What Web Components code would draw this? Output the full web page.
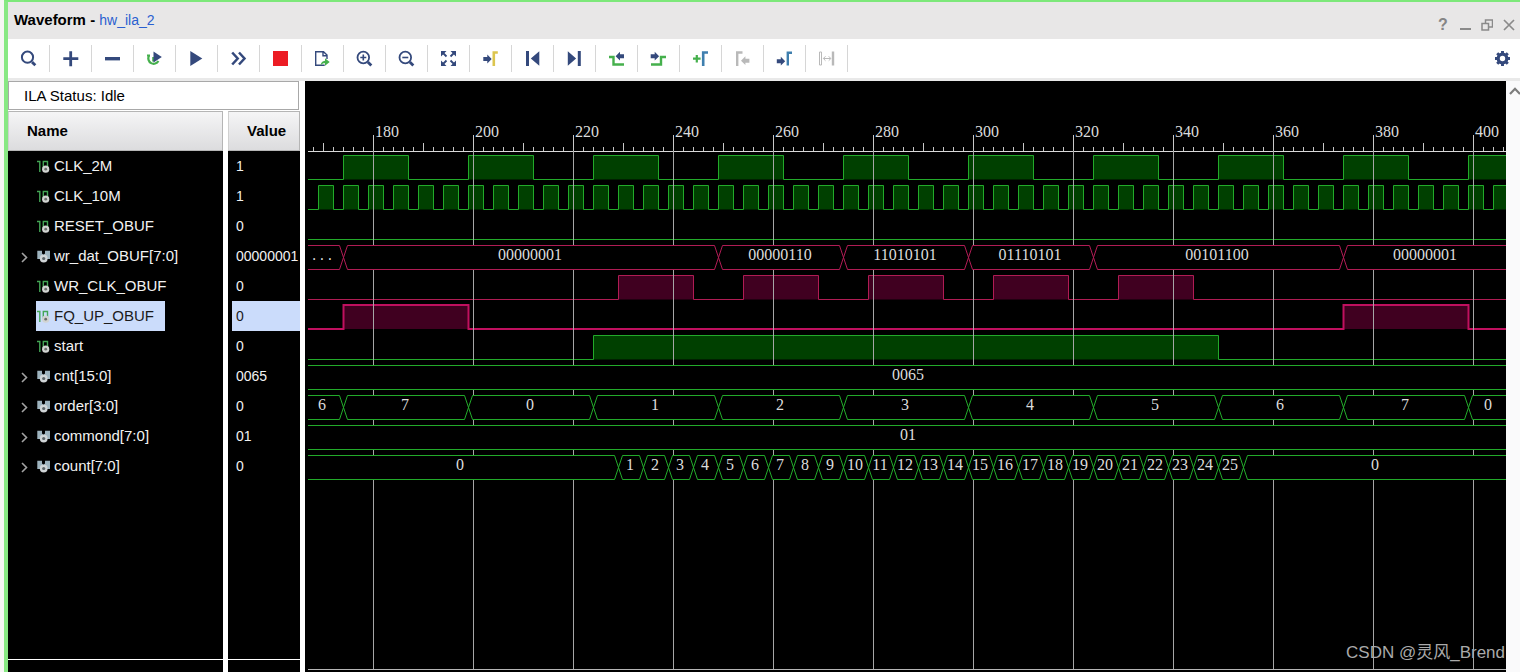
<!DOCTYPE html>
<html lang="en">
<head>
<meta charset="utf-8">
<meta name="viewport" content="width=device-width, initial-scale=1">
<title>Waveform - hw_ila_2</title>
<style>
  html, body { margin: 0; height: 100%; }
  body { font-family: "Liberation Sans", Arial, sans-serif; font-size: 15px; color: #000; background: #f6f6f4; }
</style>
</head>
<body>
<wave-window>
  <title-bar slot="title" heading="Waveform" target="hw_ila_2"></title-bar>
  <tool-bar slot="toolbar">
    <tool-button icon="search" label="Find"></tool-button>
    <tool-button icon="plus" label="Add"></tool-button>
    <tool-button icon="minus" label="Remove"></tool-button>
    <tool-button icon="retrigger" label="Auto re-trigger"></tool-button>
    <tool-button icon="play" label="Run trigger"></tool-button>
    <tool-button icon="forward" label="Run trigger immediate"></tool-button>
    <tool-button icon="stop" label="Stop trigger"></tool-button>
    <tool-button icon="export" label="Export data"></tool-button>
    <tool-button icon="zoomin" label="Zoom in"></tool-button>
    <tool-button icon="zoomout" label="Zoom out"></tool-button>
    <tool-button icon="fit" label="Zoom fit"></tool-button>
    <tool-button icon="cursor" label="Go to cursor"></tool-button>
    <tool-button icon="first" label="Go to start"></tool-button>
    <tool-button icon="last" label="Go to end"></tool-button>
    <tool-button icon="prevedge" label="Previous transition"></tool-button>
    <tool-button icon="nextedge" label="Next transition"></tool-button>
    <tool-button icon="addmarker" label="Add marker"></tool-button>
    <tool-button icon="prevmarker" label="Previous marker"></tool-button>
    <tool-button icon="nextmarker" label="Next marker"></tool-button>
    <tool-button icon="swap" label="Swap cursors"></tool-button>
    <tool-button slot="end" icon="gear" label="Settings"></tool-button>
  </tool-bar>
  <signal-panel slot="signals"><status-box slot="status">ILA Status: Idle</status-box></signal-panel>
  <wave-view slot="waves"><water-mark>CSDN @灵风_Brend</water-mark></wave-view>
  <scroll-strip slot="scroll"></scroll-strip>
</wave-window>

<script>
const NAVY = '#34497c', GREEN = '#45b04c', BLUE = '#3f7fae', GREY = '#b9b9b9';
const arrow = (x, y, color, dir = 1) =>
  `<path fill="${color}" d="M${x} ${y - 2}h${4 * dir}v-2.4l${4.4 * dir} 4.4l${-4.4 * dir} 4.4v-2.4h${-4 * dir}z"/>`;
const ICONS = {
  search: `<g fill="none" stroke="${NAVY}"><circle cx="7.5" cy="7.2" r="5.6" stroke-width="2"/><path d="M12 12l3.3 3.3" stroke-width="2.8"/></g>`,
  plus: `<path d="M1.3 8.7h15M8.7 1.2v15" stroke="${NAVY}" stroke-width="2.8"/>`,
  minus: `<path fill="${NAVY}" d="M1 7h15v3.4H1z"/>`,
  retrigger: `<path d="M1 5.5h3M3 5.8a5.2 5.2 0 1 0 9.4 5.2M7.3 7v4.5" fill="none" stroke="${GREEN}" stroke-width="2.2"/><path fill="${NAVY}" d="M7.5 1.5v11l8.3-5.5z"/>`,
  play: `<path fill="${NAVY}" d="M2.3 1v15l12-7.5z"/>`,
  forward: `<path d="M2.2 2.5l5.5 6-5.5 6M9 2.5l5.5 6-5.5 6" fill="none" stroke="${NAVY}" stroke-width="2.5"/>`,
  stop: `<path fill="#ec1c24" d="M1 1h15v15H1z"/>`,
  export: `<path d="M13 9V5L9.5 1.7H1.7v13.6h9M9 2v3.8h4" fill="none" stroke="${NAVY}" stroke-width="1.4"/><path d="M6.5 15.5c.5-3 2-4.6 4.5-4.8V8.2l4.7 3.8-4.7 3.7v-2.4c-2 0-3.2.6-4.5 2.2z" fill="${GREEN}"/>`,
  zoomin: `<g fill="none" stroke="${NAVY}"><circle cx="7.3" cy="7.5" r="5.8" stroke-width="1.8"/><path d="M4.3 7.5h6M7.3 4.5v6" stroke-width="1.6"/><path d="M11.8 12l3.5 3.5" stroke-width="2.8"/></g>`,
  zoomout: `<g fill="none" stroke="${NAVY}"><circle cx="7.3" cy="7.5" r="5.8" stroke-width="1.8"/><path d="M4.3 7.5h6" stroke-width="1.6"/><path d="M11.8 12l3.5 3.5" stroke-width="2.8"/></g>`,
  fit: `<path fill="${NAVY}" d="M1 1h5.5L1 6.5zM16 1v5.5L10.5 1zM1 16v-5.5L6.5 16zM16 16h-5.5l5.5-5.5z"/><path d="M3 3l3.5 3.5M14 3l-3.5 3.5M3 14l3.5-3.5M14 14l-3.5-3.5" stroke="${NAVY}" stroke-width="1.8"/>`,
  cursor: arrow(1.3, 9, NAVY) + `<path d="M11.8 16V2.5h4" fill="none" stroke="#dcc54e" stroke-width="2.6"/>`,
  first: `<path fill="${NAVY}" d="M2 1h3v15H2zM15.3 1.3v14.4L6.8 8.5z"/>`,
  last: `<path fill="${NAVY}" d="M11.8 1h3v15h-3zM1.8 1.3v14.4l8.3-7.2z"/>`,
  prevedge: `<path d="M1 7h4.5v7.5H16" fill="none" stroke="${GREEN}" stroke-width="2.4"/>` + arrow(16, 6.2, NAVY, -1),
  nextedge: `<path d="M1 14.5h10V7h5" fill="none" stroke="${GREEN}" stroke-width="2.4"/>` + arrow(0.7, 6.2, NAVY),
  addmarker: `<path d="M1 8.7h7.6M4.8 5v7.4" stroke="${GREEN}" stroke-width="2.2"/><path d="M11.2 16V2.5h4.8" fill="none" stroke="${BLUE}" stroke-width="2.6"/>`,
  prevmarker: `<path d="M3.2 16V2.5h5.3" fill="none" stroke="${GREY}" stroke-width="2.4"/>` + arrow(15.4, 10.7, GREY, -1),
  nextmarker: arrow(0.8, 11.2, NAVY) + `<path d="M11.8 15.5V2.8H16" fill="none" stroke="${BLUE}" stroke-width="2.4"/>`,
  swap: `<g fill="none" stroke="${GREY}"><path d="M1.5 2h2v13h-2z"/><path d="M15 1.5v14" stroke-width="2.4"/><path d="M5.5 8.5h7M7.5 6.3L5.3 8.5l2.2 2.2M10.7 6.3l2.2 2.2-2.2 2.2"/></g>`,
  gear: `<g fill="none" stroke="${NAVY}"><circle cx="8.5" cy="8.5" r="4.3" stroke-width="3.2"/><path d="M8.5 1v2.5M8.5 13.5V16M1 8.5h2.5M13.5 8.5H16M3.2 3.2L5 5M12 12l1.8 1.8M3.2 13.8L5 12M12 5l1.8-1.8" stroke-width="2.9"/></g>`
};

/* Signal list; times are in samples. */
const bits = (start, width, period, count) => Array.from({ length: count }, (_, i) => [start + i * period, start + i * period + width]);
const SIGNALS = [
  { name: 'CLK_2M', value: '1', high: bits(174, 13, 25, 10) },
  { name: 'CLK_10M', value: '1', high: bits(169, 3, 5, 48) },
  { name: 'RESET_OBUF', value: '0', high: [] },
  { name: 'wr_dat_OBUF[7:0]', value: '00000001', color: 'red', bus: [[166, '...'], [174, '00000001'], [249, '00000110'], [274, '11010101'], [299, '01110101'], [324, '00101100'], [374, '00000001']] },
  { name: 'WR_CLK_OBUF', value: '0', color: 'red', high: bits(229, 15, 25, 5) },
  { name: 'FQ_UP_OBUF', value: '0', color: 'red', selected: true, high: [[174, 199], [374, 399]] },
  { name: 'start', value: '0', high: [[224, 349]] },
  { name: 'cnt[15:0]', value: '0065', bus: [[167, '0065']] },
  { name: 'order[3:0]', value: '0', bus: [[166, '6'], ...[7, 0, 1, 2, 3, 4, 5, 6, 7, 0].map((v, i) => [174 + 25 * i, String(v)])] },
  { name: 'commond[7:0]', value: '01', bus: [[167, '01']] },
  { name: 'count[7:0]', value: '0', bus: [[166, '0'], ...Array.from({ length: 25 }, (_, i) => [229 + 5 * i, String(i + 1)]), [354, '0']] }
];
const T0 = 167, SCALE = 5;
const toX = t => (t - T0) * SCALE;

class BaseElement extends HTMLElement {
  connectedCallback() {
    if (this.shadowRoot) return;
    this.attachShadow({ mode: 'open' }).innerHTML = this.render();
    if (this.draw) {
      this.draw();
      new ResizeObserver(() => this.draw()).observe(this);
    }
  }
}

customElements.define('wave-window', class extends BaseElement {
  render() {
    return `<style>
      :host { display: flex; flex-direction: column; box-sizing: border-box; min-height: 100%; margin-left: 4px;
              border-top: 2px solid #7de87a; border-left: 4px solid #88e883; background: #fff; }
      main { flex: 1; display: flex; border-top: 3px solid #e9e9e9; }
      slot { display: contents; }
    </style>
    <slot name="title"></slot><slot name="toolbar"></slot>
    <main><slot name="signals"></slot><slot name="waves"></slot><slot name="scroll"></slot></main>`;
  }
});

customElements.define('title-bar', class extends BaseElement {
  render() {
    return `<style>
      :host { display: flex; height: 37px; background: #e8e7e7; }
      h1 { flex: 1; margin: 0; padding-left: 6px; font-size: 15px; line-height: 36px; }
      a { font-size: 14px; font-weight: 400; color: #2a5fd0; text-decoration: none; }
      nav { display: flex; padding-top: 8px; }
      button { width: 22px; height: 29px; padding: 0; border: 0; background: none; color: #858585; font: bold 16px "Liberation Sans", sans-serif; }
      svg { display: block; margin: auto; fill: none; stroke: #8a8a8a; }
    </style>
    <h1>${this.getAttribute('heading')} - <a href="#hw">${this.getAttribute('target')}</a></h1>
    <nav>
      <button aria-label="Help">?</button>
      <button aria-label="Minimize"><svg width="12" height="12"><path d="M1 10h11" stroke-width="2"/></svg></button>
      <button aria-label="Restore"><svg width="12" height="12"><path d="M1 4.5h6.5V11H1zM4.5 4.5V1h7v7h-4" stroke-width="1.5"/></svg></button>
      <button aria-label="Close"><svg width="12" height="12"><path d="M1 1l10 10M11 1L1 11" stroke-width="1.7"/></svg></button>
    </nav>`;
  }
});

customElements.define('tool-bar', class extends BaseElement {
  render() {
    return `<style>
      :host { display: flex; height: 39px; align-items: center; background: #fff; }
      div { flex: 1; display: flex; }
      ::slotted([slot="end"]) { --rule: transparent; margin-right: -4px; }
    </style><div><slot></slot></div><slot name="end"></slot>`;
  }
});

customElements.define('tool-button', class extends BaseElement {
  render() {
    return `<style>
      :host { display: block; width: 42px; }
      button { display: flex; align-items: center; justify-content: center; box-sizing: border-box; width: 100%; height: 27px;
               padding: 0; border: 0; border-right: 1px solid var(--rule, #d6d6d6); background: none; }
    </style>
    <button aria-label="${this.getAttribute('label')}"><svg width="17" height="17" viewBox="0 0 17 17">${ICONS[this.getAttribute('icon')]}</svg></button>`;
  }
});

customElements.define('status-box', class extends BaseElement {
  render() {
    return `<style>
      :host { display: block; box-sizing: border-box; height: 29px; margin: 0 1px 1px 0; padding-left: 15px; border: 1px solid #a8a8a8;
              background: #fff; line-height: 28px; }
    </style><slot></slot>`;
  }
});

customElements.define('signal-panel', class extends BaseElement {
  row(s) {
    const icon = s.bus
      ? `<path fill="#9db3be" d="M.3.7h4.7v2.8l1.5 1.5L8 3.500V.7h5V9H.3z"/><circle cx="6.7" cy="8.5" r="3.9" fill="#cfd4d6"/><circle cx="6.7" cy="8.5" r="1.6" fill="#5c6468"/>`
      : `<path d="M0 1.500h2.800V12M6.300 9V1.500h4.200V7" fill="none" stroke="#43a655" stroke-width="1.4"/><circle cx="8.7" cy="9.2" r="3.6" fill="#d2d4d2"/><circle cx="8.7" cy="9.2" r="1.4" fill="#6b6f6b"/>`;
    const toggle = s.bus
      ? `<button aria-label="Expand ${s.name}"><svg width="7" height="11"><path d="M1 1l4.5 4.5L1 10" fill="none" stroke="#a2a2a2" stroke-width="1.6"/></svg></button>` : '';
    return `<tr class="${s.selected ? 'selected' : ''}"><td><div class="cell"><span class="toggle">${toggle}</span><span class="label"><svg width="13" height="13">${icon}</svg>${s.name}</span></div></td>
      <td><div class="value">${s.value}</div></td></tr>`;
  }
  render() {
    return `<style>
      :host { display: flex; flex-direction: column; flex: none; width: 292px; margin-right: 5px; }
      .body { flex: 1; display: flex; flex-direction: column; justify-content: space-between;
              background: linear-gradient(90deg, #000 215px, #fff 215px, #fff 220px, #000 220px); }
      table { width: 100%; table-layout: fixed; border-collapse: separate; border-spacing: 0; color: #f2f2f2; }
      col:first-child { width: 220px; }
      th, td { padding: 0; }
      th { height: 40px; text-align: left; color: #000; background: #fff; }
      th div { box-sizing: border-box; height: 40px; padding-left: 18px; line-height: 38px; border: 1px solid #b5b5b5; border-left-color: #d0d0d0;
               background: linear-gradient(#f5f5f6, #dcdcde); }
      th:first-child { padding-right: 5px; }
      td { height: 30px; line-height: 30px; white-space: nowrap; }
      .cell { display: flex; height: 30px; }
      .toggle { width: 28px; display: flex; }
      button { width: 14px; margin-left: 9px; padding: 2px 0 0; border: 0; background: none; }
      button svg { display: block; margin: auto; }
      .label { display: flex; align-items: center; gap: 4px; padding: 0 11px 0 1px; }
      .value { margin-left: 4px; padding-left: 4px; font-size: 14px; overflow: hidden; }
      .selected .label, .selected .value { background: #cbdcfb; color: #1a1a1a; }
      footer { height: 12px; border-top: 1px solid #fff; }
    </style>
    <slot name="status"></slot>
    <div class="body">
      <table><colgroup><col><col></colgroup>
        <thead><tr><th><div>Name</div></th><th><div>Value</div></th></tr></thead>
        <tbody>${SIGNALS.map(s => this.row(s)).join('')}</tbody>
      </table>
      <footer></footer>
    </div>`;
  }
});

customElements.define('time-ruler', class extends BaseElement {
  render() {
    return `<style>
      :host { display: block; height: 70px; }
      svg { display: block; width: 100%; height: 71px; overflow: hidden; font: 16px "Liberation Serif", serif; fill: #dcdcdc; }
    </style><svg></svg>`;
  }
  draw() {
    const w = this.clientWidth;
    let ticks = '', labels = '';
    for (let t = T0 + 1; toX(t) < w; t += 2) {
      const x = toX(t) + 0.5, len = t % 20 === 0 ? 16 : t % 10 === 0 ? 8 : 4;
      ticks += `M${x} ${70 - len}V70`;
      if (len === 16 && x + 26 < w) labels += `<text x="${toX(t) + 2}" y="56">${t}</text>`;
    }
    this.shadowRoot.querySelector('svg').innerHTML = `<path d="${ticks}" stroke="#c8c8c8"/><path d="M0 70.5H${w}" stroke="#d8d8d8"/>${labels}`;
  }
});

customElements.define('wave-track', class extends BaseElement {
  render() {
    return `<style>
      :host { display: block; height: 30px; --line: #22aa2a; --fill: #004000; }
      :host([color="red"]) { --line: #b01c54; --fill: #400020; }
      :host([selected]) { --line: #c0105f; --weight: 2px; }
      :host([bus]) { position: relative; z-index: 2; }
      svg { display: block; width: 100%; height: 30px; overflow: hidden; font: 16px "Liberation Serif", serif; }
      .line { fill: none; stroke: var(--line); stroke-width: var(--weight, 1px); }
      .fill { fill: var(--fill); }
      .mask { fill: #000; }
      text { fill: #dcdcdc; text-anchor: middle; }
      .more { font: 13px "Liberation Mono", monospace; }
    </style><svg></svg>`;
  }
  draw() {
    const s = SIGNALS[this.getAttribute('index')];
    const w = this.clientWidth;
    this.shadowRoot.querySelector('svg').innerHTML = s.bus ? this.bus(s.bus, w) : this.bit(s, w);
  }
  bit(s, w) {
    const top = s.selected ? 4 : 4.5, low = s.selected ? 28 : 28.5;
    let line = `M0 ${low}`, fill = '';
    for (const [a, b] of s.high) {
      const x1 = toX(a) + 0.5, x2 = toX(b) + 0.5;
      if (x1 > w) break;
      line += `H${x1}V${top}H${x2}V${low}`;
      fill += `M${x1} ${low}V${top}H${x2}V${low}z`;
    }
    return `<path class="fill" d="${fill}"/><path class="line" d="${line}H${w + 99}"/>`;
  }
  bus(list, w) {
    let line = '', text = '';
    list.forEach(([t, label], i) => {
      const a = toX(t) + 0.5, b = i === list.length - 1 ? w + 4 : toX(list[i + 1][0]) + 0.5;
      if (a > w) return;
      line += `M${a + 4} 4.5H${b - 4}M${a + 4} 28.5H${b - 4}`;
      if (i) line += `M${a - 4} 4.5L${a + 4} 28.5M${a - 4} 28.5L${a + 4} 4.5`;
      else line += `M0 4.5H9M0 28.5H9`;
      text += `<text${label === '...' ? ' class="more"' : ''} x="${Math.floor((a + b) / 2) - 1}" y="19">${label}</text>`;
    });
    return `<rect class="mask" y="5" width="${w}" height="23"/><path class="line" d="${line}"/>${text}`;
  }
});

customElements.define('wave-view', class extends BaseElement {
  render() {
    return `<style>
      :host { position: relative; flex: 1; min-width: 0; display: flex; padding: 0 0 2px 3px; background: #000; }
      .plot { position: relative; flex: 1; min-width: 0; border-bottom: 1px solid #b5b5b5; }
      .grid { position: absolute; inset: 70px 0 0 0; z-index: 1; pointer-events: none;
              background: repeating-linear-gradient(90deg, #a6a6a6 0 1px, transparent 1px 100px) 65px 0; }
    </style>
    <div class="plot">
      <time-ruler></time-ruler>
      ${SIGNALS.map((s, i) => `<wave-track index="${i}" color="${s.color || 'green'}"${s.bus ? ' bus' : ''}${s.selected ? ' selected' : ''}></wave-track>`).join('')}
      <div class="grid"></div>
    </div><slot></slot>`;
  }
});

customElements.define('water-mark', class extends BaseElement {
  render() {
    return `<style>
      :host { position: absolute; right: 1px; bottom: 6px; z-index: 3; font: 17px/26px "Liberation Sans", "Noto Sans CJK SC", sans-serif; color: #aaa; white-space: nowrap; }
    </style><slot></slot>`;
  }
});

customElements.define('scroll-strip', class extends BaseElement {
  render() {
    return `<style>
      :host { display: block; flex: none; width: 14px; overflow: hidden; background: #fafafb; }
      button { display: block; padding: 6px 0 0 3px; border: 0; background: none; }
      svg { display: block; }
    </style><button aria-label="Scroll up"><svg width="12" height="8"><path d="M1 7l5-5.2L11 7" fill="none" stroke="#7c7c7c" stroke-width="2.2"/></svg></button>`;
  }
});
</script>
</body>
</html>
